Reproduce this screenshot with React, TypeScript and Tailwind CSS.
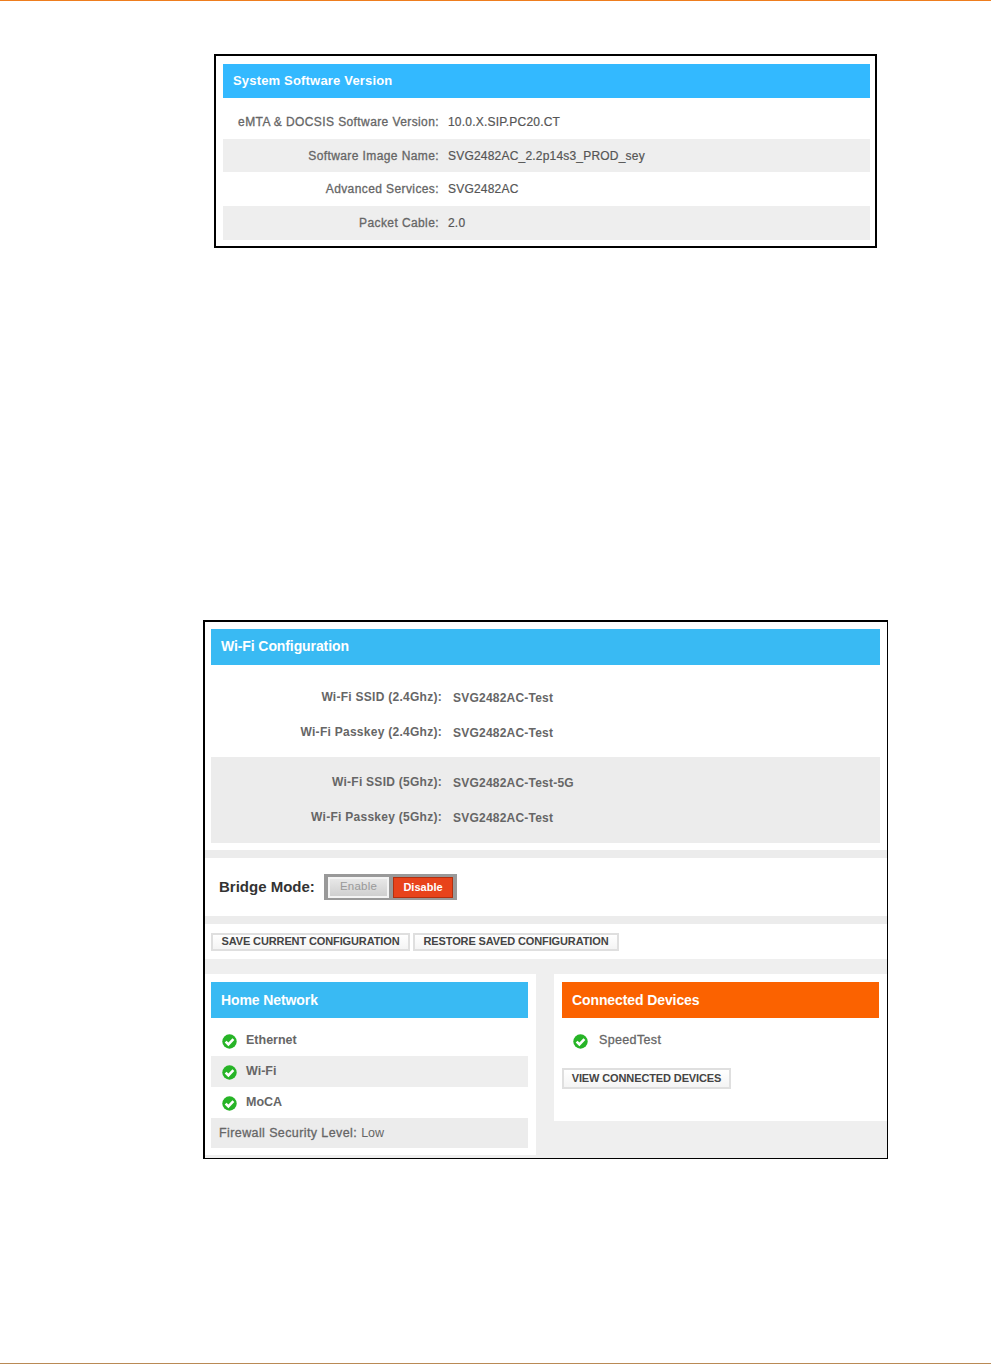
const Check = () => (
  <svg width="15" height="15" viewBox="0 0 15 15" className="shrink-0">
    <circle cx="7.5" cy="7.5" r="7.2" fill="#27b427" />
    <path d="M3.6 7.6 L6.4 10.3 L11.4 5.2" fill="none" stroke="#fff" strokeWidth="2.6" />
  </svg>
);

function Row({ label, value, shaded }: { label: string; value: string; shaded?: boolean }) {
  return (
    <div className={`flex h-[33.7px] items-center ${shaded ? "bg-[#eeeeee]" : "bg-white"}`}>
      <span className="w-[216px] whitespace-nowrap text-right text-[#666] tracking-[0.4px] [-webkit-text-stroke:0.3px_#666]">{label}</span>
      <span className="ml-[9px] text-[#555] tracking-[0.2px] [-webkit-text-stroke:0.2px_#555]">{value}</span>
    </div>
  );
}

function WifiRow({ label, value }: { label: string; value: string }) {
  return (
    <div className="flex h-[35px] items-center">
      <span className="-mt-[2px] w-[231px] whitespace-nowrap text-right font-bold tracking-[0.27px] text-[#666]">{label}</span>
      <span className="ml-[11px] font-bold tracking-[0.22px] text-[#666]">{value}</span>
    </div>
  );
}

function Status({ label, shaded, light }: { label: string; shaded?: boolean; light?: boolean }) {
  return (
    <div className={`flex h-[31px] items-center pl-[11px] ${shaded ? "bg-[#eeeeee]" : ""}`}>
      <div className="pt-[2px]"><Check /></div>
      {light ? (
        <span className="ml-[11px] text-[12.5px] tracking-[0.35px] text-[#666] [-webkit-text-stroke:0.3px_#666]">{label}</span>
      ) : (
        <span className="ml-[9px] text-[12.5px] font-bold text-[#666]">{label}</span>
      )}
    </div>
  );
}

function OutlineButton({ children, className }: { children: string; className: string }) {
  return (
    <div className={`flex items-center justify-center border-2 border-[#dfdfdf] bg-gradient-to-b from-white to-[#f4f4f4] text-[11px] font-bold tracking-[-0.12px] text-[#444] ${className}`}>
      {children}
    </div>
  );
}

export default function App() {
  return (
    <div className="relative flex h-[1364px] w-[991px] flex-col bg-white font-['Liberation_Sans',Arial,sans-serif]">
      <div className="h-px bg-[#ee7d1e]" />

      {/* System software box */}
      <div className="ml-[214px] mt-[53px] h-[194px] w-[663px] border-2 border-black pl-[7px] pr-[5px] pt-[8px] text-[12px]">
        <div className="flex h-[34px] items-center bg-[#33b9ff] pl-[10px] text-[13px] font-bold tracking-[0.18px] text-white">System Software Version</div>
        <div className="pt-[7px]">
          <Row label="eMTA & DOCSIS Software Version:" value="10.0.X.SIP.PC20.CT" />
          <Row label="Software Image Name:" value="SVG2482AC_2.2p14s3_PROD_sey" shaded />
          <Row label="Advanced Services:" value="SVG2482AC" />
          <Row label="Packet Cable:" value="2.0" shaded />
        </div>
      </div>

      {/* Wi-Fi config box */}
      <div className="ml-[203px] mt-[372px] h-[539px] w-[685px] overflow-hidden border border-l-2 border-t-2 border-black bg-[#efefef] text-[12px]">
        <div className="bg-white pb-[7px] pl-[6px] pr-[7px] pt-[7px]">
          <div className="flex h-[36px] items-center bg-[#39baf3] pb-[2px] pl-[10px] text-[14px] font-bold tracking-[-0.1px] text-white">Wi-Fi Configuration</div>
          <div className="pb-[7px] pt-[15px]">
            <WifiRow label="Wi-Fi SSID (2.4Ghz):" value="SVG2482AC-Test" />
            <WifiRow label="Wi-Fi Passkey (2.4Ghz):" value="SVG2482AC-Test" />
          </div>
          <div className="bg-[#ececec] pb-[8px] pt-[8px]">
            <WifiRow label="Wi-Fi SSID (5Ghz):" value="SVG2482AC-Test-5G" />
            <WifiRow label="Wi-Fi Passkey (5Ghz):" value="SVG2482AC-Test" />
          </div>
        </div>

        <div className="h-[8px] bg-[#ececec]" />
        <div className="flex h-[58px] items-center bg-white pl-[14px]">
          <span className="w-[105px] text-[15px] font-bold text-[#333]">Bridge Mode:</span>
          <div className="flex h-[26px] w-[133px] items-center gap-[4px] bg-[#999] px-[4px]">
            <div className="flex h-[21px] w-[61px] items-center justify-center border-2 border-[#f4f4f4] bg-gradient-to-b from-[#e8e8e8] to-[#cfcfcf] text-[11.5px] tracking-[0.2px] text-[#999]">Enable</div>
            <div className="flex h-[21px] w-[60px] items-center justify-center border border-[#b3300f] bg-[#e8431b] text-[11px] font-bold text-white">Disable</div>
          </div>
        </div>
        <div className="h-[8px] bg-[#ececec]" />
        <div className="flex h-[35px] items-center gap-[3px] bg-white pl-[6px]">
          <OutlineButton className="h-[18px] w-[199px]">SAVE CURRENT CONFIGURATION</OutlineButton>
          <OutlineButton className="h-[18px] w-[206px]">RESTORE SAVED CONFIGURATION</OutlineButton>
        </div>

        <div className="flex items-start gap-[18px] pt-[15px]">
          <div className="h-[181px] w-[331px] bg-white pl-[6px] pr-[8px] pt-[8px]">
            <div className="mb-[7px] flex h-[36px] items-center bg-[#39baf3] pl-[10px] text-[14px] font-bold tracking-[-0.1px] text-white">Home Network</div>
            <Status label="Ethernet" />
            <Status label="Wi-Fi" shaded />
            <Status label="MoCA" />
            <div className="flex h-[30px] items-center bg-[#ececec] pl-[8px] text-[12.5px] text-[#666]">
              <span className="tracking-[0.4px] [-webkit-text-stroke:0.3px_#666]">Firewall Security Level:</span>
              <span className="ml-1">Low</span>
            </div>
          </div>
          <div className="h-[147px] flex-1 bg-white pl-[8px] pr-[8px] pt-[8px]">
            <div className="mb-[7px] flex h-[36px] items-center bg-[#fb6200] pl-[10px] text-[14px] font-bold tracking-[-0.1px] text-white">Connected Devices</div>
            <Status label="SpeedTest" light />
            <OutlineButton className="mt-[12px] h-[21px] w-[169px]">VIEW CONNECTED DEVICES</OutlineButton>
          </div>
        </div>
      </div>

      <div className="absolute bottom-0 left-0 h-px w-full bg-[#b98a55]" />
    </div>
  );
}
